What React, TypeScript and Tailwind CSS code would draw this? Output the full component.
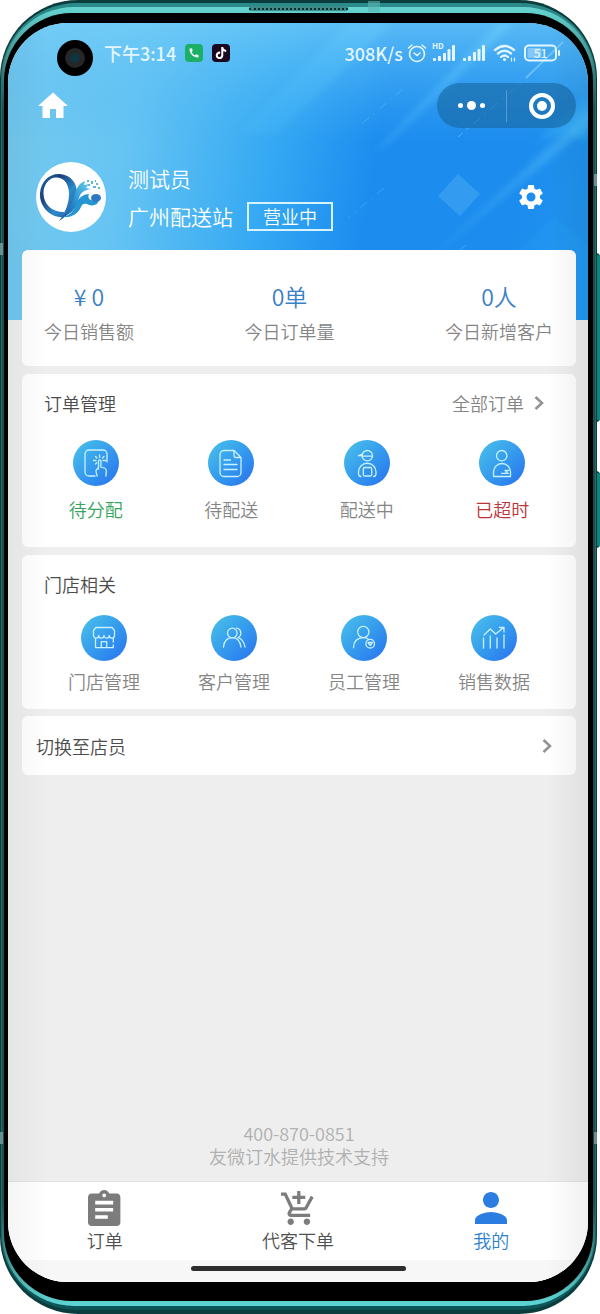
import type { ReactNode } from 'react';
import { MdHome, MdSettings, MdCall } from 'react-icons/md';
import { SiTiktok } from 'react-icons/si';

type Entry = { label: string; color?: string; icon: ReactNode };

const orderEntries: Entry[] = [
    {
        label: '待分配',
        color: 'text-[#35a45c]',
        icon: (
            <>
                <path d="M22 36h-6a4 4 0 0 1-4-4V14a4 4 0 0 1 4-4h14a4 4 0 0 1 4 4v8" />
                <path d="M25.5 29v-8a1.2 1.2 0 0 1 2.4 0v6l3.4 1q2 .6 2 3l-.4 5M25.5 27.500l-2 2q-1 1-.2 3.500l.8 3" />
                <path d="M20.500 20.500h2.500M30 20.500h3M26.600 15v2.500M22.500 16.500l1.500 1.500M31 16.500l-1.500 1.500M22.500 24l1.300-1.200" />
            </>
        ),
    },
    {
        label: '待配送',
        icon: (
            <>
                <path d="M26 10.500H16a4 4 0 0 0-4 4v18a4 4 0 0 0 4 4h13a4 4 0 0 0 4-4v-15zM26 10.500v5a2 2 0 0 0 2 2h5" />
                <path d="M16 20h6.500M16 24.500h13M16 29.500h13" />
            </>
        ),
    },
    {
        label: '配送中',
        icon: (
            <>
                <circle cx="23.300" cy="15.700" r="5.200" />
                <path d="M14.500 15.700H18M18 16.200h10.500M18.500 14l-4 1.700" />
                <path d="M17 36.500q-2.500 0-2.500-3V32a8.700 8.700 0 0 1 17.500 0v1.500q0 3-2.500 3" />
                <rect x="19.300" y="27.500" width="8.400" height="8.500" rx="1.500" />
            </>
        ),
    },
    {
        label: '已超时',
        color: 'text-[#bb3438]',
        icon: (
            <>
                <circle cx="22.700" cy="15.700" r="5.200" />
                <path d="M14.500 36.500V32a8.500 8.500 0 0 1 17 0v4.500z" />
                <path d="M22.500 33.300h7M26 30.300h4M26.500 31.800h2" />
            </>
        ),
    },
];

const storeEntries: Entry[] = [
    {
        label: '门店管理',
        icon: (
            <>
                <path d="M15 12.500h16l2.500 3v5a2.600 2.600 0 0 1-5.200 0 2.600 2.600 0 0 1-5.300 0 2.600 2.600 0 0 1-5.300 0 2.600 2.600 0 0 1-5.200 0v-5z" />
                <path d="M14.500 23.500v9.200h17.800V30M32.300 27v-3.500M20.300 32.700v-6h5.400v6" />
            </>
        ),
    },
    {
        label: '客户管理',
        icon: (
            <>
                <circle cx="21.300" cy="18" r="4.800" />
                <path d="M25.500 13.200a4.900 4.900 0 0 1 1.500 9.300M12.500 32q1-9.300 9-9.300 7 0 8.500 9.300M27 22.700q5.500 1.500 7 9.300" />
            </>
        ),
    },
    {
        label: '员工管理',
        icon: (
            <>
                <circle cx="22.300" cy="17" r="5.600" />
                <path d="M12.500 32.700q.5-9.800 9.800-10 3 0 4.700 1.300" />
                <circle cx="29.200" cy="28.700" r="4.300" />
                <path d="M27 27.500h4.400l-2.200 3z" />
            </>
        ),
    },
    {
        label: '销售数据',
        icon: (
            <>
                <path d="M12.500 23v10M19.300 21v12M26 23v10M33 20v13" />
                <path d="M13 20l6.300-6 5.400 5 8-6.500M28.500 12.500H33V17" />
            </>
        ),
    },
];

const EntryGrid = ({ entries, className, labelGap }: { entries: Entry[]; className: string; labelGap: string }) => (
    <div className={`grid grid-cols-4 ${className}`}>
        {entries.map((entry) => (
            <button key={entry.label} className="flex flex-col items-center">
                <span className="w-[46px] h-[46px] rounded-full bg-linear-to-br from-[#4cc3e9] to-[#2a70ee]">
                    <svg viewBox="0 0 46 46" fill="none" stroke="#c8f2fd" strokeWidth="1.300" strokeLinecap="round" strokeLinejoin="round">
                        {entry.icon}
                    </svg>
                </span>
                <span className={`text-lg leading-[26px] ${labelGap} ${entry.color ?? 'text-[#858585]'}`}>{entry.label}</span>
            </button>
        ))}
    </div>
);

const Chevron = () => (
    <svg className="w-[10px] h-4" viewBox="0 0 10 16" fill="none" stroke="#929292" strokeWidth="2.500">
        <path d="M1.500 2l6.500 6-6.500 6" />
    </svg>
);

const Signal = ({ hd }: { hd?: boolean }) => (
    <svg className="w-6 h-[18px]" viewBox="0 0 24 18" fill="#e3f6ff">
        <rect x="1" y="14" width="3" height="3" rx="1" />
        <rect x="6" y="12" width="3" height="5" rx="1" />
        <rect x="11" y={hd ? 9 : 8} width="3" height={hd ? 8 : 9} rx="1" />
        <rect x="15.500" y="5" width="3" height="12" rx="1" />
        <rect x="20" y="1" width="3" height="16" rx="1" />
    </svg>
);

const StatusBar = () => (
    <div className="h-[60px] pl-[96px] pr-[27px] flex items-center justify-between text-[#e3f6ff] text-lg font-medium">
        <div className="flex items-center">
            <span>下午3:14</span>
            <span className="ml-[9px] w-[18px] h-[18px] rounded bg-[#1cb067] text-white flex items-center justify-center">
                <MdCall className="w-3 h-3" />
            </span>
            <span className="ml-[9px] w-[18px] h-[18px] rounded bg-[#1b0820] text-white flex items-center justify-center">
                <SiTiktok className="w-3 h-3" />
            </span>
        </div>
        <div className="flex items-center">
            <span>308K/s</span>
            <svg className="ml-1 w-5 h-5" viewBox="0 0 20 20" fill="none" stroke="currentColor" strokeWidth="1.600" strokeLinecap="round">
                <circle cx="10" cy="11" r="7.500" />
                <path d="M7 10l3 2.500 3-2.500M1.500 5l3.500-3M18.500 5L15 2" />
            </svg>
            <span className="relative ml-[5px]">
                <Signal hd />
                <span className="absolute left-0 -top-1 text-[8px] leading-3 font-bold">HD</span>
            </span>
            <span className="ml-[6px]"><Signal /></span>
            <svg className="ml-[7px] w-6 h-5" viewBox="0 0 24 20" fill="none" stroke="currentColor" strokeWidth="2.300" strokeLinecap="round">
                <path d="M2 7q9.500-8 19 0M5 10.500q6.500-5.500 13 0M8 14q3.500-3 7 0" />
                <circle cx="11.500" cy="16.500" r="1.500" fill="currentColor" stroke="none" />
                <path d="M18.500 15v3M21.500 15v3" strokeWidth="1.200" />
            </svg>
            <svg className="ml-[7px] w-[37px] h-[18px]" viewBox="0 0 37 18" fill="none" stroke="currentColor">
                <rect x="1" y="1.500" width="31" height="15" rx="4" strokeWidth="2" />
                <rect x="3.500" y="4" width="14" height="10" rx="1.500" fill="currentColor" fillOpacity=".4" stroke="none" />
                <path d="M35 7v4" strokeWidth="2" strokeLinecap="round" />
                <text x="16.500" y="13.500" fontSize="12" textAnchor="middle" fill="currentColor" stroke="none">51</text>
            </svg>
        </div>
    </div>
);

const Logo = () => (
    <svg className="w-[70px] h-[70px] rounded-full bg-white" viewBox="0 0 70 70">
        <defs>
            <linearGradient id="ring" x1="0" y1="0" x2="1" y2="1">
                <stop offset="0" stopColor="#1f6fa6" />
                <stop offset=".3" stopColor="#1d3f7c" />
                <stop offset=".6" stopColor="#2c8ccb" />
                <stop offset="1" stopColor="#1f4a94" />
            </linearGradient>
            <linearGradient id="swoosh" x1="0" y1="1" x2="1" y2="0">
                <stop offset="0" stopColor="#1c4a94" />
                <stop offset=".5" stopColor="#2a90cf" />
                <stop offset="1" stopColor="#6ad2ee" />
            </linearGradient>
        </defs>
        {/* ring */}
        <path fill="url(#ring)" d="M27 55C14 56 3 44 4 31 5 19 14 11 24 12c11 1 17 9 17 19 0 11-7 21-18 28 6-8 10-17 10-27 0-9-4-16-12-16.500C13 15 7 23 7.500 32 8 42 15 50 28 50z" />
        {/* body and wave */}
        <path fill="url(#swoosh)" d="M23 59c7-8 13-15 15-24 2-8 5-14 11-16l-1 4 5-1-3 4 5 1c-7 1-11 4-12 9-2 8-6 14-12 17-3 2-6 4-8 6z" />
        <path fill="#2596d3" d="M27 55c8-2 11-7 13-12 2-7 7-11 13-11-1 2-1 5 2 6 2 1 4-1 5-2l2 5c-3 3-8 3-11 1-3-1-5 0-6 3-3 7-10 11-18 10z" />
        <ellipse cx="60" cy="36" rx="5" ry="4" fill="#2c78c2" />
        <g fill="#5bb9d8">
            <rect x="51" y="18" width="2" height="2" />
            <rect x="55" y="19" width="2" height="3" />
            <rect x="52" y="22" width="2" height="2" />
            <rect x="57" y="24" width="3" height="2" />
            <rect x="60" y="21" width="2" height="2" />
            <rect x="62" y="25" width="2" height="2" />
            <rect x="59" y="18" width="1" height="2" />
        </g>
    </svg>
);

const HeaderArt = () => (
    <svg className="absolute inset-0 w-full h-full" viewBox="0 0 580 297" preserveAspectRatio="none">
        <defs>
            <linearGradient id="sky" x1="0" y1="0" x2="0" y2="1">
                <stop offset="0" stopColor="#72cdf8" stopOpacity=".7" />
                <stop offset=".4" stopColor="#4db6f5" stopOpacity="0" />
            </linearGradient>
            <linearGradient id="ray" x1="1" y1="0" x2="0" y2="1">
                <stop offset="0" stopColor="#7fe0ff" stopOpacity=".4" />
                <stop offset="1" stopColor="#4fc0ff" stopOpacity="0" />
            </linearGradient>
            <filter id="soft" x="-20%" y="-20%" width="140%" height="140%">
                <feGaussianBlur stdDeviation="3" />
            </filter>
        </defs>
        <rect width="580" height="297" fill="url(#sky)" />
        <g filter="url(#soft)">
            <path fill="url(#ray)" d="M340 0h44L270 110h-40zM490 0h16L380 122l-16 8zM585 82v18L440 222l-30 24z" />
            <path fill="#43c3ff" fillOpacity=".35" d="M530 118l50-45v45l-25-8z" />
        </g>
        <path fill="#8fdcff" fillOpacity=".2" d="M450 151l22 20-20 22-22-20z" />
        <path fill="#35b4ff" fillOpacity=".12" d="M547 193l33 30v74H440z" />
        <g stroke="#9fe2ff" strokeOpacity=".45">
            <path d="M555 19l-37 36" strokeWidth="2" />
            <path d="M513 60L450 114" strokeDasharray="3 5 9 6" />
            <path d="M395 66l-45 38M376 165l-36 30M458 222l-26 22" strokeOpacity=".25" strokeDasharray="9 6 2 5" />
        </g>
    </svg>
);

const Header = () => (
    <header className="relative pb-[88px] bg-[linear-gradient(100deg,#77caed_0%,#66c4f3_22%,#35a9f3_45%,#1c8cef_62%,#1c8cee_85%,#2196ef_100%)]">
        <HeaderArt />
        <div className="relative">
            <StatusBar />
            <div className="flex items-center justify-between pl-[27px] pr-3">
                <button aria-label="首页" className="text-white">
                    <MdHome className="w-9 h-9" />
                </button>
                <div className="w-[139px] h-[45px] rounded-full bg-[#17659e]/60 flex items-center">
                    <button aria-label="更多" className="flex-1 flex items-center justify-center gap-1">
                        <span className="w-[5px] h-[5px] rounded-full bg-white" />
                        <span className="w-[9px] h-[9px] rounded-full bg-white" />
                        <span className="w-[5px] h-[5px] rounded-full bg-white" />
                    </button>
                    <span className="w-px h-8 bg-white/25" />
                    <button aria-label="关闭" className="flex-1 flex justify-center">
                        <span className="w-[26px] h-[26px] rounded-full border-4 border-white flex items-center justify-center">
                            <span className="w-[10px] h-[10px] rounded-full bg-white" />
                        </span>
                    </button>
                </div>
            </div>
            <div className="mt-[34px] pl-7 pr-[42px] flex items-center text-white">
                <Logo />
                <div className="ml-[22px] text-[21px] leading-8">
                    <p>测试员</p>
                    <div className="mt-[6px] flex items-center gap-[14px]">
                        <span>广州配送站</span>
                        <span className="px-[14px] h-[29px] border-2 border-[#d5f4ff] text-lg leading-6">营业中</span>
                    </div>
                </div>
                <button aria-label="设置" className="ml-auto">
                    <MdSettings className="w-[30px] h-[30px]" />
                </button>
            </div>
        </div>
    </header>
);

const stats = [
    { value: '¥ 0', label: '今日销售额' },
    { value: '0单', label: '今日订单量' },
    { value: '0人', label: '今日新增客户' },
];

const TabBar = () => (
    <nav className="bg-white border-t border-[#e2e2e2]">
        <div className="grid grid-cols-3 pt-2 pb-[7px] text-lg leading-[26px] text-[#505050]">
            <button className="flex flex-col items-center gap-px">
                <svg className="h-9" viewBox="3 1 18 20" fill="#7c7c7c">
                    <path d="M19 3h-4.180C14.400 1.840 13.300 1 12 1s-2.400.840-2.820 2H5c-1.100 0-2 .900-2 2v14c0 1.100.900 2 2 2h14c1.100 0 2-.900 2-2V5c0-1.100-.900-2-2-2zm-7 0c.550 0 1 .450 1 1s-.450 1-1 1-1-.450-1-1 .450-1 1-1zm2 14H7v-2h7v2zm3-4H7v-2h10v2zm0-4H7V7h10v2z" />
                </svg>
                <span>订单</span>
            </button>
            <button className="flex flex-col items-center gap-px">
                <svg className="h-[34px] my-px" viewBox="1 1 21 21" fill="#7c7c7c">
                    <path d="M11 9h2V6h3V4h-3V1h-2v3H8v2h3v3zm-4 9c-1.100 0-1.990.900-1.990 2S5.900 22 7 22s2-.900 2-2-.900-2-2-2zm10 0c-1.100 0-1.990.900-1.990 2s.890 2 1.990 2 2-.900 2-2-.900-2-2-2zm-9.830-3.250.030-.120.900-1.630h7.450c.750 0 1.410-.410 1.750-1.030l3.860-7.010L19.420 4h-.010l-1.100 2-2.760 5H8.530l-.130-.270L6.160 6l-.950-2-.940-2H1v2h2l3.600 7.590-1.350 2.450c-.160.280-.250.610-.250.960 0 1.100.900 2 2 2h12v-2H7.420c-.130 0-.250-.110-.250-.250z" />
                </svg>
                <span>代客下单</span>
            </button>
            <button className="flex flex-col items-center gap-px text-[#2c7fd0]">
                <svg className="h-8 my-[2px]" viewBox="4 4 16 16" fill="#2b7de1">
                    <path d="M12 12c2.210 0 4-1.790 4-4s-1.790-4-4-4-4 1.790-4 4 1.790 4 4 4zm0 2c-2.670 0-8 1.340-8 4v2h16v-2c0-2.660-5.330-4-8-4z" />
                </svg>
                <span>我的</span>
            </button>
        </div>
        <div className="h-[22px] bg-[#f7f7f7] pt-[6px]">
            <div className="mx-auto w-[215px] h-[5px] rounded-full bg-[#2d2d2d]" />
        </div>
    </nav>
);

const Screen = () => (
    <div className="relative flex-1 flex flex-col overflow-hidden rounded-[60px] bg-[#eee]">
        <Header />
        <main className="relative -mt-[70px] flex-1 flex flex-col pl-[14px] pr-3">
            <section className="rounded-md bg-white pt-[31px] pb-[22px] pl-[22px] pr-[23px] flex justify-between text-center">
                {stats.map((stat) => (
                    <div key={stat.label}>
                        <p className="text-[23px] leading-[30px] text-[#3a80c6]">{stat.value}</p>
                        <p className="mt-[7px] text-lg leading-[26px] text-[#858585]">{stat.label}</p>
                    </div>
                ))}
            </section>

            <section className="mt-2 rounded-md bg-white pt-4 pb-[25px]">
                <div className="flex items-center justify-between pl-[22px] pr-8 text-lg leading-[26px]">
                    <h2 className="text-[#4c4c4c]">订单管理</h2>
                    <a href="#orders" className="flex items-center gap-[10px] text-[#858585]">
                        全部订单
                        <Chevron />
                    </a>
                </div>
                <EntryGrid entries={orderEntries} className="mt-6 px-[6px]" labelGap="mt-[10px]" />
            </section>

            <section className="mt-2 rounded-md bg-white pt-4 pb-[15px]">
                <h2 className="pl-[22px] text-lg leading-[26px] text-[#4c4c4c]">门店相关</h2>
                <EntryGrid entries={storeEntries} className="mt-[18px] px-[17px]" labelGap="mt-[7px]" />
            </section>

            <button className="mt-[7px] h-[59px] rounded-md bg-white pl-[14px] pr-6 flex items-center justify-between text-lg text-[#4c4c4c]">
                切换至店员
                <Chevron />
            </button>

            <footer className="mt-auto pb-[13px] text-center text-lg leading-[23px] text-[#b0b0b0]">
                <p>400-870-0851</p>
                <p>友微订水提供技术支持</p>
            </footer>
        </main>
        <TabBar />

        {/* camera hole */}
        <div className="absolute left-[49px] top-[17px] w-9 h-9 rounded-full bg-black flex items-center justify-center">
            <div className="w-5 h-5 rounded-full bg-[#262626] flex items-center justify-center">
                <div className="w-[10px] h-[10px] rounded-full bg-[#0e3440]" />
            </div>
        </div>
        {/* curved glass shading */}
        <div className="absolute inset-y-0 left-0 w-10 bg-linear-to-r from-black/4 to-transparent pointer-events-none" />
        <div className="absolute inset-y-0 right-0 w-10 bg-linear-to-l from-black/6 to-transparent pointer-events-none" />
    </div>
);

export default function App() {
    return (
        <div className="relative min-h-screen flex flex-col bg-white pr-[3px] font-['Noto_Sans_CJK_SC','Noto_Sans',sans-serif] font-[350]">
            <div className="absolute right-0 top-[253px] w-1 h-[169px] rounded-r bg-[#0b8580] border-y-2 border-[#07504e]" />
            <div className="absolute right-0 top-[471px] w-1 h-[77px] rounded-r bg-[#0b8580] border-y-2 border-[#07504e]" />

            <div className="relative flex-1 flex flex-col rounded-[78px] bg-[#0b3d3f] px-px pt-[3px] pb-1">
                <div className="flex-1 flex flex-col rounded-[76px] bg-[linear-gradient(to_bottom,#2b8a8a,#2c6866_8%,#2c6866_92%,#0b5558)] px-px py-1">
                    <div className="flex-1 flex flex-col rounded-[72px] bg-[linear-gradient(to_bottom,#66d5d2,#1c4c4c_8%,#1c4c4c_92%,#5ed6d4)] px-[2px] pt-[6px] pb-[5px]">
                        <div className="flex-1 flex flex-col rounded-[68px] bg-black pl-1 pr-[5px] pt-[10px] pb-[19px]">
                            <Screen />
                        </div>
                    </div>
                </div>
                {/* speaker grille and antenna bands */}
                <div className="absolute left-[249px] top-[6px] w-[99px] h-[5px] rounded-full bg-[#3d8b89] flex items-center">
                    <div className="w-full border-t-2 border-dotted border-[#072d2e]" />
                </div>
                <div className="absolute left-[368px] top-px w-3 h-[11px] bg-[#5cb5b2]/60" />
                <div className="absolute left-0 top-[243px] w-[3px] h-3 bg-[#67908e]" />
                <div className="absolute left-0 top-[1132px] w-[3px] h-3 bg-[#67908e]" />
                <div className="absolute right-0 top-[174px] w-[3px] h-3 bg-[#67908e]" />
                <div className="absolute right-0 top-[1132px] w-[3px] h-3 bg-[#67908e]" />
            </div>
        </div>
    );
}
